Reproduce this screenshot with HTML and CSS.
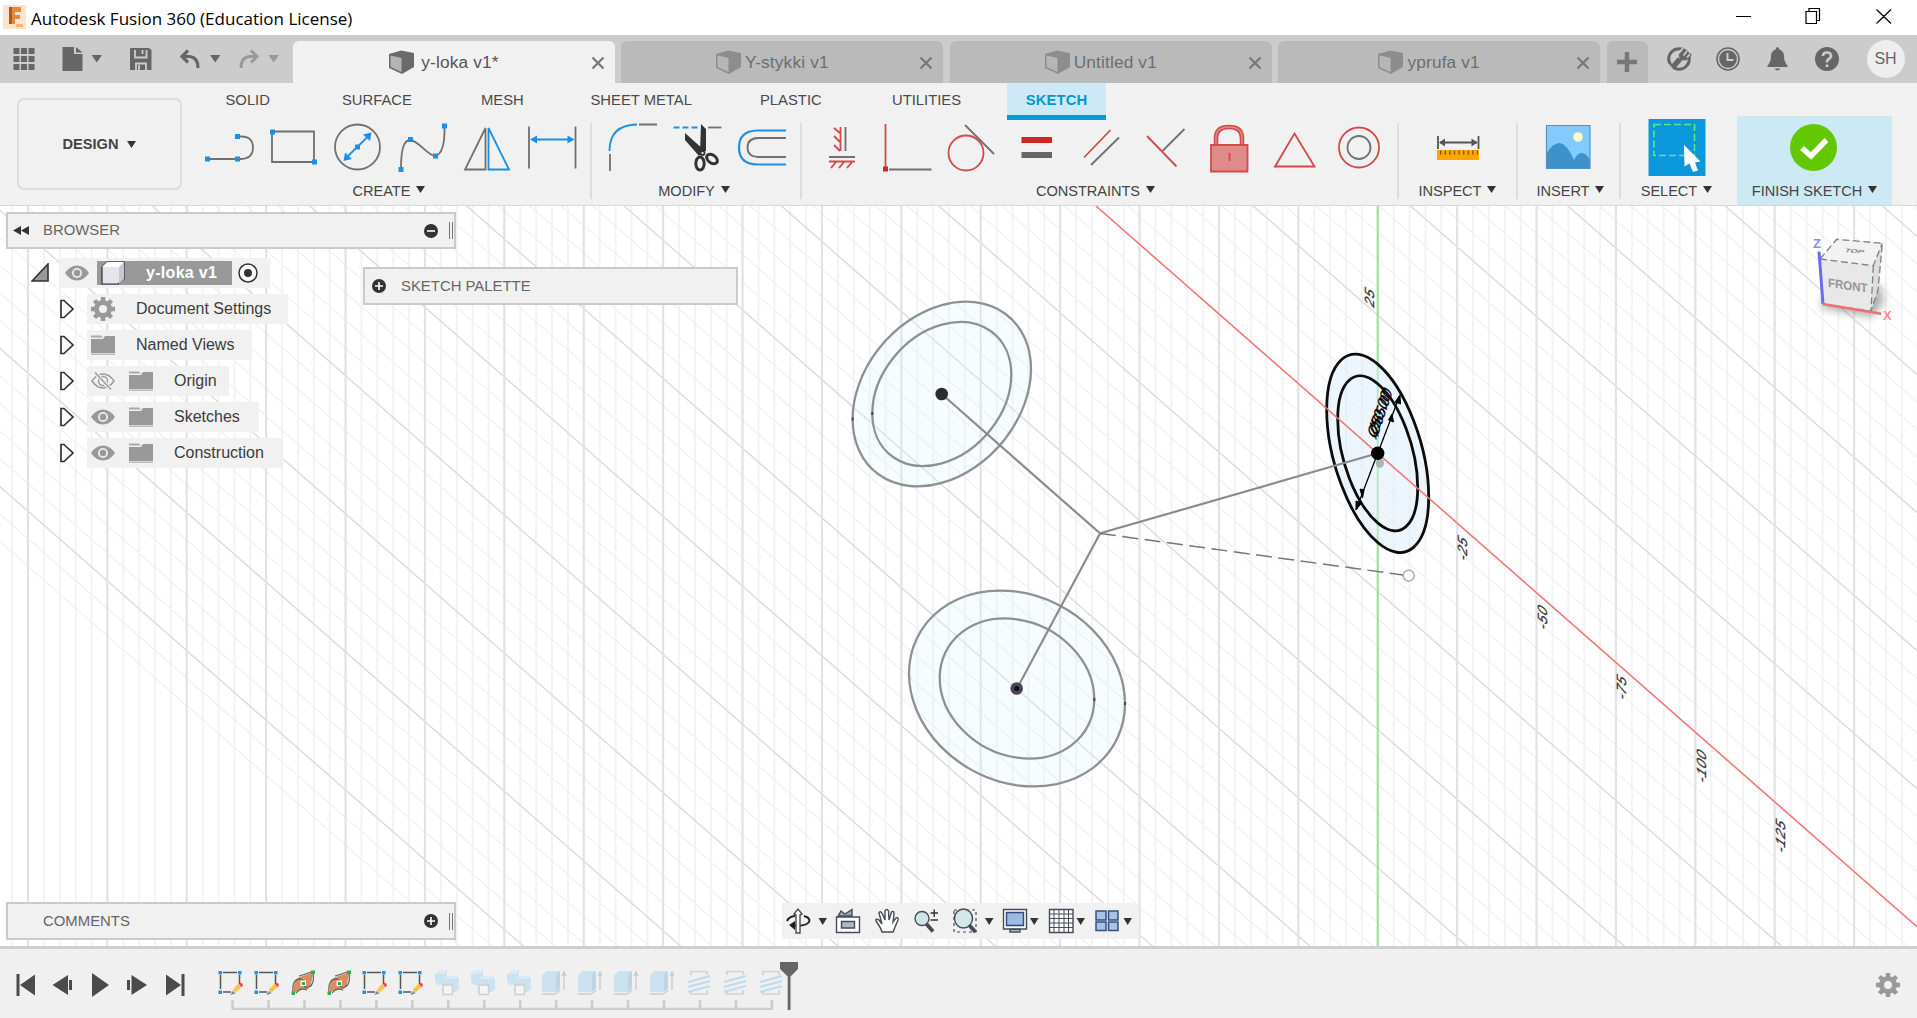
FILE: index.html
```html
<!DOCTYPE html>
<html lang="en">
<head>
<meta charset="utf-8">
<title>Autodesk Fusion 360 (Education License)</title>
<link rel="stylesheet" href="styles.css">
</head>
<body>
<svg class="defs" width="0" height="0">
  <symbol id="cube" viewBox="0 0 25 24"><path d="M0 4L12 0.500L25 3V17L13 24L0 18Z" fill="#6a6a6a"/><path d="M1.500 5.500L12.500 8V22L1.500 17Z" fill="#b4b4b4"/></symbol>
  <symbol id="close" viewBox="0 0 14 14"><path d="M1.500 1.500L12.500 12.500M12.500 1.500L1.500 12.500" stroke="#777" stroke-width="2.200" fill="none"/></symbol>
  <symbol id="caret" viewBox="0 0 9 7"><path d="M0 0H9L4.500 7Z" fill="currentColor"/></symbol>
  <symbol id="eye" viewBox="0 0 24 16"><path d="M0 8Q5 0.500 12 0.500T24 8Q19 15.500 12 15.500T0 8Z" fill="#999"/><circle cx="12" cy="8" r="5" fill="#eee"/><circle cx="12" cy="8" r="3.200" fill="#999"/></symbol>
  <symbol id="eye-off" viewBox="0 0 24 18"><path d="M1 9Q6 2 12 2T23 9Q18 16 12 16T1 9Z" fill="none" stroke="#999" stroke-width="1.500"/><circle cx="12" cy="9" r="4.500" fill="none" stroke="#999" stroke-width="1.500"/><path d="M4 0.500L20 17.500" stroke="#f1f1f1" stroke-width="4"/><path d="M4 0.500L20 17.500" stroke="#999" stroke-width="1.500"/></symbol>
  <symbol id="folder" viewBox="0 0 24 20"><path d="M0 0.500H10L12 2.500H0Z" fill="#aaa"/><path d="M0 4H12L14 1H24V18H0Z" fill="#999"/><path d="M0 18.500H24V20H0Z" fill="#bbb"/></symbol>
  <symbol id="gear" viewBox="-12 -12 24 24"><circle r="6.500" fill="none" stroke="#999" stroke-width="5"/><path d="M0-12V-7M0 12V7M-12 0H-7M12 0H7M-8.500-8.500L-5-5M8.500 8.500L5 5M-8.500 8.500L-5 5M8.500-8.500L5-5" stroke="#999" stroke-width="4.500"/></symbol>
  <symbol id="expand" viewBox="0 0 14 20"><path d="M1 1.500H4L13 10L4 18.500H1Z" fill="#fafafa" stroke="#333" stroke-width="1.700"/></symbol>
  <symbol id="plus-dot" viewBox="0 0 14 14"><circle cx="7" cy="7" r="7" fill="#333"/><path d="M3 7H11M7 3V11" stroke="#fff" stroke-width="1.600"/></symbol>
  <symbol id="minus-dot" viewBox="0 0 14 14"><circle cx="7" cy="7" r="7" fill="#333"/><path d="M3 7H11" stroke="#fff" stroke-width="1.600"/></symbol>
  <symbol id="f-sketch" viewBox="0 0 26 26"><path d="M5 2.500H19M2.500 5V19M21.500 5V14M5 22H13" stroke="#555" stroke-width="1.500" fill="none"/><path d="M0.500 1H4V4.500H0.500ZM20 1H23.500V4.500H20ZM0.500 20.500H4V24H0.500Z" fill="#1c8fe8"/><path d="M14.500 20L20.500 13.500L23.500 17L17 23Z" fill="#fdbf4d"/><path d="M20.500 13.500Q24.500 11.500 25 15.500L23.500 17Z" fill="#f4404a"/><path d="M14.500 21L17.500 23.500L12.500 25Z" fill="#888"/></symbol>
  <symbol id="f-form" viewBox="-1 0 26 26"><path d="M3 23Q2 9 9 7Q15 5 22 2Q21 15 17 19Q10 17 3 23Z" fill="#dd8d5c"/><path d="M2 22Q1 9 9 9Q13 10 13 14Q14 19 18 17Q24 14 22 3M8 6Q15 4 20 2M5 23Q10 17 16 20" fill="none" stroke="#666" stroke-width="1.300"/><path d="M20 0.500H24V4H20ZM0.500 21.500H4V25H0.500Z" fill="#27b34c"/><path d="M9.500 10.500H15V16H9.500Z" fill="#fff"/><path d="M10.800 12H14V15H10.800Z" fill="#27b34c"/></symbol>
  <symbol id="f-combine" viewBox="0 0 26 26"><path d="M1 4L5 0.500H13V6H22L25 9V19L21 22H8V15H4L1 12Z" fill="#cde2f0"/><path d="M13 6L9 9H21L25 6ZM1 4L5 0.500H13L10 4Z" fill="#dbeaf4"/><path d="M9 15H18.500V24.500H9Z" fill="#f5f5f5" stroke="#cfcfcf" stroke-width="1.500"/></symbol>
  <symbol id="f-extrude" viewBox="2 0 26 26"><path d="M2 5L7 1H20V18L15 22H2Z" fill="#cde2f0"/><path d="M16 5L20 1V18L16 22Z" fill="#bdd6e6"/><path d="M2 24H15L20 20" stroke="#d5d5d5" stroke-width="2" fill="none"/><path d="M24 20V4M22 6L24 2L26 6" stroke="#c9c9c9" stroke-width="1.300" fill="none"/></symbol>
  <symbol id="f-thread" viewBox="0 0 26 26"><path d="M5 5V1.500H21V5M5 20V24H21V20" fill="none" stroke="#d2d2d2" stroke-width="1.700"/><path d="M2 12L24 6M2 17L24 11M2 22L24 16" stroke="#bedcf0" stroke-width="2.200"/></symbol>
</svg>

<header class="title-bar">
  <svg class="app-logo" viewBox="0 0 23 24"><path d="M0 0H23V24H0Z" fill="#fbe3cc"/><path d="M6 2H18V7H12V10H17V14H12V19H6Z" fill="#e58a3a"/><path d="M6 2H9V19H6Z" fill="#a85a20"/><path d="M13 19H20V22H13Z" fill="#f0b37c"/></svg>
  <span class="app-title">Autodesk Fusion 360 (Education License)</span>
  <svg class="win-buttons" viewBox="1730 0 170 35" fill="none" stroke="#000" stroke-width="1.200"><path d="M1736 16.500H1751M1806 11.500H1816.500V23.500H1806ZM1809 11.500V8.500H1819.500V20.500H1816.500M1876.500 9.500L1891 23.500M1891 9.500L1876.500 23.500"/></svg>
</header>

<nav class="doc-bar">
  <svg class="quick-tools" viewBox="0 35 293 48">
    <g fill="#666"><path d="M13.500 48h6v6h-6zM21 48h6v6h-6zM28.500 48h6v6h-6zM13.500 56h6v6h-6zM21 56h6v6h-6zM28.500 56h6v6h-6zM13.500 64h6v6h-6zM21 64h6v6h-6zM28.500 64h6v6h-6z"/>
    <path d="M62.500 47H74V54H82.500V71H62.500ZM76 47L82.500 52.500H76Z"/><path d="M91.500 55H102L96.800 62.500ZM210 55H220.500L215.200 62.500Z"/>
    <path d="M130 48H149L151.500 50V70H130Z"/></g>
    <path d="M135 50V57.500H146.500V50M142.500 50V54M136 70V63.500H146V70M139 65V70" fill="none" stroke="#ccc" stroke-width="1.800"/>
    <path d="M188 50.500L182 56.500L188 62.500M183 56.500H190Q198 57.500 198 68" fill="none" stroke="#666" stroke-width="3.200"/>
    <path d="M251 50.500L257 56.500L251 62.500M256 56.500H249Q241 57.500 241 68" fill="none" stroke="#999" stroke-width="3"/>
    <path d="M268.500 55H279L273.700 62.500Z" fill="#999"/>
  </svg>
  <div class="doc-tab active"><svg class="doc-cube"><use href="#cube"/></svg><span>y-loka v1*</span><svg class="doc-close"><use href="#close"/></svg></div>
  <div class="doc-tab"><svg class="doc-cube"><use href="#cube"/></svg><span>Y-stykki v1</span><svg class="doc-close"><use href="#close"/></svg></div>
  <div class="doc-tab"><svg class="doc-cube"><use href="#cube"/></svg><span>Untitled v1</span><svg class="doc-close"><use href="#close"/></svg></div>
  <div class="doc-tab"><svg class="doc-cube"><use href="#cube"/></svg><span>yprufa v1</span><svg class="doc-close"><use href="#close"/></svg></div>
  <div class="add-tab"><svg viewBox="0 0 20 20"><path d="M0 10H20M10 0V20" stroke="#777" stroke-width="4.500"/></svg></div>
  <svg class="status-icons" viewBox="1648 35 200 48">
    <circle cx="1679" cy="59" r="10.300" fill="none" stroke="#666" stroke-width="3"/>
    <path d="M1684 49.500L1680 55L1681 59L1686 59L1691 54" fill="#666" stroke="#666" stroke-width="2.500"/><path d="M1680 59L1672 68" stroke="#666" stroke-width="5.500"/><path d="M1683 48L1680 52M1687 51L1683.500 55.500M1690 54L1687 57.500" stroke="#ccc" stroke-width="1.800"/><path d="M1668 64L1673 70" stroke="#ccc" stroke-width="1.500"/>
    <circle cx="1728" cy="59" r="11" fill="none" stroke="#666" stroke-width="1.600"/><circle cx="1728" cy="59" r="8.800" fill="#666"/><path d="M1727.500 53V60H1733.500" fill="none" stroke="#ccc" stroke-width="2"/>
    <path d="M1777.500 47Q1779 47 1779.500 49.500Q1784 51 1784 56Q1784 62 1787.500 65.500V67H1767.500V65.500Q1771 62 1771 56Q1771 51 1775.500 49.500Q1776 47 1777.500 47ZM1774.500 68.500H1780.500Q1777.500 72.500 1774.500 68.500Z" fill="#666"/>
    <circle cx="1827" cy="59" r="12" fill="#666"/><path d="M1823 56Q1823 52.500 1827 52.500T1831 56Q1831 58 1828 59.500Q1827 60.500 1827 62.500M1827 64.500V67" fill="none" stroke="#ccc" stroke-width="2.600"/>
  </svg>
  <div class="avatar">SH</div>
</nav>

<section class="ribbon">
  <button class="workspace">DESIGN<svg class="caret"><use href="#caret"/></svg></button>
  <div class="ribbon-main">
    <div class="ribbon-tabs"><span class="t1">SOLID</span><span class="t2">SURFACE</span><span class="t3">MESH</span><span class="t4">SHEET METAL</span><span class="t5">PLASTIC</span><span class="t6">UTILITIES</span><span class="t7">SKETCH</span></div>
    <div class="groups">
      <div class="group g-create">
        <svg viewBox="183 120 408 56" fill="none" stroke="#707070" stroke-width="1.800">
          <path d="M208 159H238M240 136.500Q253 136 253 147.500T240 159"/>
          <path d="M272 131.500H314V162H272Z"/>
          <circle cx="357.500" cy="147" r="22.500"/>
          <path d="M401 168Q401 140 410 140C418 140 428 156 435 156Q445 154 444.500 127"/>
          <path d="M485.500 128V169.500H465Z"/>
          <path d="M529 126.500V168.500M575.500 126.500V168.500"/>
          <g stroke="#1c8fe8"><path d="M488.500 128V169.500H509Z"/><path d="M532 139.500H572M347 157L368 136.500" stroke-width="1.800"/></g>
          <g fill="#1c8fe8" stroke="none"><path d="M205 156.500h5v5h-5zM235 156.500h5v5h-5zM235 134h5v5h-5zM270 129.500h5v5h-5zM312 159.500h5v5h-5zM355 144.500h5v5h-5zM398.500 167h5v5h-5zM408 137h5v5h-5zM433 153.500h5v5h-5zM442 123.500h5v5h-5zM530 139.500L537 135.500V143.500ZM574.500 139.500L567.500 135.500V143.500ZM371.500 132.500L370 141L363 134.500ZM343.500 161L345 152.500L352 159Z"/></g>
        </svg>
        <div class="label">CREATE<svg class="caret"><use href="#caret"/></svg></div>
      </div>
      <div class="group g-modify">
        <svg viewBox="591 120 210 56" fill="none" stroke="#707070" stroke-width="1.800">
          <path d="M609.500 151Q609.500 125 637 124.500" stroke="#1c8fe8"/><path d="M610 154V171M639 124.500H657"/>
          <path d="M673.500 127.500H698" stroke="#1c8fe8" stroke-dasharray="6 3"/><path d="M708 127.500H721.500"/>
          <path d="M701 124L706 129V151L700 152ZM685 133L704 150L699 156L685 140Z" fill="#333" stroke="none"/><circle cx="702.500" cy="153" r="2" fill="#fff" stroke="#333"/><ellipse cx="700" cy="163.500" rx="4.200" ry="6.500" stroke="#333" stroke-width="3"/><ellipse cx="712" cy="159" rx="6" ry="4" transform="rotate(38 712 159)" stroke="#333" stroke-width="3"/>
          <path d="M786 130.500H757Q739 131 739 147.500T757 164.500H786" stroke="#1c8fe8" stroke-width="2.200"/><path d="M786 138H758Q747.500 138.500 747.500 147.500T758 157H786"/>
        </svg>
        <div class="label">MODIFY<svg class="caret"><use href="#caret"/></svg></div>
      </div>
      <div class="group g-constraints">
        <svg viewBox="801 120 597 56" fill="none" stroke="#707070" stroke-width="1.800">
          <g stroke="#d24a4a">
            <path d="M840.500 127V151M840 133L834 128M840 142L834 136M840 151L834 145M829 161.500H855M836 162L831 168M844 162L839 168M852 162L847 168M885.500 124V168"/>
            <circle cx="966" cy="153" r="17.500"/>
            <path d="M1084 157.500L1110.500 130M1147 136L1176.500 166.500M1275 166.500L1294.500 133.500L1314.500 166.500Z"/>
            <circle cx="1359" cy="147.500" r="20"/>
            <path d="M1216 144V138Q1216 127 1229 127T1242 138V144" stroke-width="4.500"/><path d="M1216 144V138Q1216 127 1229 127T1242 138V144" stroke="#e08b8b" stroke-width="1.500"/>
            <path d="M1211 145H1247.500V171.500H1211Z" fill="#e08b8b"/><path d="M1229.500 153V161"/>
          </g>
          <path d="M845.500 127V151M829 157H855M889 169.500H931.500M965 125L994 154M1091 165L1119 137.500M1162.500 151L1184.500 129"/>
          <circle cx="1359" cy="147.500" r="11.500"/>
          <path d="M883 166.500h5v5h-5zM1021.500 137H1052V143H1021.500Z" fill="#cc2828" stroke="none"/><path d="M1021.500 152H1052V158H1021.500Z" fill="#666" stroke="none"/>
        </svg>
        <div class="label">CONSTRAINTS<svg class="caret"><use href="#caret"/></svg></div>
      </div>
      <div class="group g-inspect">
        <svg viewBox="1398 120 119 56"><path d="M1438 136V149M1478.500 136V149M1440 142.500H1477" stroke="#555" stroke-width="1.800"/><path d="M1439 142.500L1445 138.500V146.500ZM1477.500 142.500L1471.500 138.500V146.500Z" fill="#555"/><path d="M1437 150H1479V160H1437Z" fill="#ffa500"/><path d="M1440 152.500H1478" stroke="#8a5a00" stroke-width="4" stroke-dasharray="1.400 3.200"/></svg>
        <div class="label">INSPECT<svg class="caret"><use href="#caret"/></svg></div>
      </div>
      <div class="group g-insert">
        <svg viewBox="1517 120 103 56"><path d="M1546.500 125.500H1590V168.500H1546.500Z" fill="#83caff"/><path d="M1546.500 154Q1552 143 1560 143Q1567 144 1574 160Q1578 152 1582 153Q1586 153 1590 160V168.500H1546.500Z" fill="#3e92cc"/><path d="M1546.500 125.500H1590V168.500H1546.500Z" fill="none" stroke="#4f94c4" stroke-width="1.200"/><circle cx="1578" cy="137" r="4.800" fill="#fff8c8"/></svg>
        <div class="label">INSERT<svg class="caret"><use href="#caret"/></svg></div>
      </div>
      <div class="group g-select">
        <svg viewBox="1620 120 113 56"><path d="M1648.500 119H1705.500V176H1648.500Z" fill="#0a97dc"/><path d="M1654 124.500H1694.500V155.500H1654Z" fill="none" stroke="#69e08c" stroke-width="1.600" stroke-dasharray="7 3"/><path d="M1684 145L1700.500 161.500L1695 162.500L1698 170.500L1693 172L1689.500 163.500L1684.500 166.500Z" fill="#fff"/></svg>
        <div class="label">SELECT<svg class="caret"><use href="#caret"/></svg></div>
      </div>
      <div class="group g-finish">
        <svg viewBox="1737 120 155 56"><circle cx="1813.500" cy="147.500" r="23.500" fill="#63c800"/><path d="M1802 148L1811 156L1826.500 140" fill="none" stroke="#fff" stroke-width="5.500"/></svg>
        <div class="label">FINISH SKETCH<svg class="caret"><use href="#caret"/></svg></div>
      </div>
    </div>
  </div>
</section>

<main class="canvas">
  <svg class="scene" viewBox="0 206 1917 740" fill="none">
    <path d="M11.150 576H1917" stroke="#f3f3f3" stroke-width="740" stroke-dasharray="2 13.880"/>
    <g transform="matrix(1 .878 0 1 1377.7 453.300)">
      <path d="M-419.200-829.500V1300" stroke="#f0f0f0" stroke-width="1917" stroke-dasharray="1.600 26.020"/>
      <path d="M-419.200-829.300V1300" stroke="#d8d8d8" stroke-width="1917" stroke-dasharray="1.500 136.600"/>
    </g>
    <path d="M26.900 576H1917" stroke="#e2e2e2" stroke-width="740" stroke-dasharray="2 77.400"/>
    <g class="profile faint">
      <circle r="1" transform="matrix(89.200 -25 0 88.900 941.800 394)"/><circle r="1" transform="matrix(69.500 -19.500 0 69.300 941.800 394)"/>
      <circle r="1" transform="matrix(108 15 0 96.800 1017 688.500)"/><circle r="1" transform="matrix(77.300 10.800 0 69.200 1017 688.500)"/>
    </g>
    <path d="M1377.700 206V946" stroke="#8fe88f" stroke-width="1.800"/>
    <g class="profile sharp">
      <circle r="1" transform="matrix(51 43.500 0 89.200 1377.700 453.300)"/><circle r="1" transform="matrix(40 34.100 0 69.600 1377.700 453.300)"/>
    </g>
    <path d="M1096 206L1917 926.800" stroke="#f87474" stroke-width="1.500"/>
    <path d="M941.700 394L1100 533.400L1377.700 453.300M1100 533.400L1017 688.500" stroke="#8c8c8c" stroke-width="2.200"/>
    <path d="M1100 533.400L1403 575" stroke="#777" stroke-width="1.500" stroke-dasharray="16 6.500"/>
    <circle cx="1408.700" cy="575.700" r="5.500" fill="#fff" stroke="#aaa" stroke-width="1.500"/>
    <ellipse cx="1380" cy="463" rx="4" ry="5" fill="#999" opacity=".7"/>
    <circle cx="941.700" cy="394" r="6.300" fill="#2b2b33"/><circle cx="1016.700" cy="688.500" r="6.300" fill="#4a4458"/><circle cx="1016.700" cy="688.500" r="2.500" fill="#111"/>
    <path d="M1356 510L1400 395" stroke="#000" stroke-width="1.300"/>
    <path d="M1400 395L1400.500 404L1395 402ZM1392 414L1393.500 422L1388.500 420ZM1356 510L1356 501L1361.500 503ZM1364 490L1362.500 498L1360 489Z" fill="#000" stroke="#000"/>
    <circle cx="1377.700" cy="453.300" r="6.700" fill="#000"/>
    <path d="M852.700 417.500v3M872.300 412v3M1125 702v3M1094.300 698v3" stroke="#444" stroke-width="2"/>
    <g class="dimension"><text transform="matrix(.32 -.95 .8 .7 1375.500 440)">Ø50.00</text><text transform="matrix(.32 -.95 .8 .7 1377.500 437)">Ø65.00</text></g>
    <g class="axis-label">
      <text transform="matrix(0 -1 .95 .5 1373.500 308)">25</text>
      <text transform="matrix(0 -1 .95 .5 1467 562)">-25</text>
      <text transform="matrix(0 -1 .95 .5 1547 631)">-50</text>
      <text transform="matrix(0 -1 .95 .5 1626 701)">-75</text>
      <text transform="matrix(0 -1 .95 .5 1705.500 784)">-100</text>
      <text transform="matrix(0 -1 .95 .5 1785 854)">-125</text>
    </g>
  </svg>

  <svg class="view-cube" viewBox="1800 225 110 105">
    <defs><filter id="soft" x="-30%" y="-30%" width="160%" height="160%"><feGaussianBlur stdDeviation="4"/></filter></defs>
    <path d="M1822 296L1880 285L1884 302L1872 317L1822 308Z" fill="#777" opacity=".6" filter="url(#soft)"/>
    <path d="M1820 259L1836.700 239.300L1882.300 243.300L1878 290L1871 311L1822.700 304Z" fill="#e8e8e8"/>
    <path d="M1820 259L1836.700 239.300L1882.300 243.300L1873.300 265.700Z" fill="#f2f2f2"/>
    <path d="M1873.300 265.700L1882.300 243.300L1878 290L1871 311Z" fill="#dedede"/>
    <path d="M1820 259L1836.700 239.300L1882.300 243.300L1878 290L1871 311L1822.700 304M1820 259L1873.300 265.700L1882.300 243.300M1873.300 265.700L1871 311" fill="none" stroke="#808080" stroke-width="1.300" stroke-dasharray="7 3.500"/>
    <path d="M1819 251.700L1823 304" stroke="#6a6aee" stroke-width="3"/><path d="M1823 304L1881 313.700" stroke="#ee7070" stroke-width="2.500"/>
    <text class="face" transform="matrix(.92 .13 0 1 1828 287)">FRONT</text>
    <text class="top-face" transform="matrix(.85 .07 -.3 .45 1844 252)">TOP</text>
    <text class="axis-z" x="1813" y="248">Z</text><text class="axis-x" x="1883" y="320">X</text>
  </svg>

  <div class="panel browser-head"><svg class="rewind" viewBox="0 0 16 9"><path d="M8 0V9L0 4.500ZM16 0V9L8 4.500Z" fill="#333"/></svg><span>BROWSER</span><svg class="dot"><use href="#minus-dot"/></svg><i class="grip"></i></div>
  <div class="tree">
    <div class="row root"><svg class="tri" viewBox="0 0 18 19"><path d="M17 1V18H1Z" fill="#999" stroke="#333" stroke-width="1.600"/></svg>
      <div class="item"><svg class="eye"><use href="#eye"/></svg>
        <span class="name"><svg viewBox="0 0 24 24"><path d="M1 6L6 1H23V18L17 23H1Z" fill="#e4e4ea" stroke="#333" stroke-width="1.200"/><path d="M1 6L6 1H23L18 6Z" fill="#fff"/><path d="M18 6L23 1V18L18 23Z" fill="#c8c8d0"/></svg>y-loka v1</span>
        <svg class="radio" viewBox="0 0 20 20"><circle cx="10" cy="10" r="9" fill="#fff" stroke="#333" stroke-width="1.500"/><circle cx="10" cy="10" r="4" fill="#333"/></svg></div></div>
    <div class="row"><svg class="exp"><use href="#expand"/></svg><div class="item w1"><svg class="gear"><use href="#gear"/></svg><span>Document Settings</span></div></div>
    <div class="row"><svg class="exp"><use href="#expand"/></svg><div class="item w2"><svg class="folder"><use href="#folder"/></svg><span>Named Views</span></div></div>
    <div class="row"><svg class="exp"><use href="#expand"/></svg><div class="item w3"><svg class="eye"><use href="#eye-off"/></svg><svg class="folder"><use href="#folder"/></svg><span>Origin</span></div></div>
    <div class="row"><svg class="exp"><use href="#expand"/></svg><div class="item w4"><svg class="eye"><use href="#eye"/></svg><svg class="folder"><use href="#folder"/></svg><span>Sketches</span></div></div>
    <div class="row"><svg class="exp"><use href="#expand"/></svg><div class="item w5"><svg class="eye"><use href="#eye"/></svg><svg class="folder"><use href="#folder"/></svg><span>Construction</span></div></div>
  </div>
  <div class="panel palette"><svg class="dot"><use href="#plus-dot"/></svg><span>SKETCH PALETTE</span></div>
  <div class="panel comments"><span>COMMENTS</span><svg class="dot"><use href="#plus-dot"/></svg><i class="grip"></i></div>

  <svg class="nav-bar" viewBox="782 903 357 36" fill="none" stroke="#444b58" stroke-width="1.400">
    <path d="M804 916Q811 918 809 922Q805 927 791 925M787 921Q789 916.500 795 916" stroke="#222" stroke-width="2"/><path d="M796 933V915L794 914L798 909L802 914L800 915V933Z" fill="#fff"/><path d="M795 921L789 925L795 930Z" fill="#222" stroke="none"/>
    <path d="M836.500 917H859.500V932.500H836.500Z" fill="#fff"/><path d="M841.500 921.500H854.500V928H841.500Z" fill="#aeb9c9"/><path d="M838 916L841 911L845 914L852 909.500V916Z" fill="#9aa3ae"/>
    <path d="M882 932Q881 928 876 921Q875 918 879 920L882 924L879 913Q880 910 882.500 914L885 920L885 911Q887 908 888.500 911L889 920L891.500 912Q894 910 894 914L893 922L896 918Q899 917 898 920L893 932Z" fill="#fff"/>
    <circle cx="922" cy="918.500" r="7" fill="#cfe4e6"/><path d="M926.500 924L933 931.500" stroke-width="3.800"/><path d="M930.500 913H938M934.200 909.500V917M930.500 920H938" stroke="#333"/>
    <path d="M954 910H976V932H954Z" stroke-dasharray="3 3" stroke-width="1.200"/><ellipse cx="963.500" cy="918.500" rx="9" ry="9.500" fill="#d3e8e4"/><path d="M969 925L975.500 932" stroke-width="4"/>
    <path d="M1003.500 909.500H1026.500V929H1003.500Z" fill="#fff"/><path d="M1006.500 912.500H1023.500V925.500H1006.500Z" fill="#9cb9e2" stroke="#2b4a80"/><path d="M1010 929.500V932H1020V929.500Z" fill="#ddd"/>
    <path d="M1049.500 909.500H1073V932.500H1049.500Z" fill="#fff"/><path d="M1054 910V932M1059 910V932M1064 910V932M1068.500 910V932M1050 914H1073M1050 918.500H1073M1050 923H1073M1050 927.500H1073" stroke-width="1"/>
    <path d="M1096 911H1106V920H1096ZM1108.500 911H1118V920H1108.500ZM1096 922H1106V930.500H1096ZM1108.500 922H1118V930.500H1108.500Z" fill="#a9c2e8" stroke="#34527f" stroke-width="1.500"/>
    <path d="M818.500 918H827L822.700 925ZM985 918H993.500L989.200 925ZM1030 918H1038.500L1034.200 925ZM1076.500 918H1085L1080.700 925ZM1123.500 918H1132L1127.700 925Z" fill="#333" stroke="none"/>
  </svg>
</main>

<footer class="timeline">
  <svg class="playback" viewBox="0 949 201 69" fill="#4b4b4d"><path d="M16.500 974H19.500V996H16.500ZM20 985L35 974.500V995.500ZM52.500 985L68 975V995ZM69 980H72V990H69ZM92 973V997L109 985ZM127 980H130V990H127ZM131.500 975V995L147 985ZM166 974.500V995.500L181 985ZM181.500 974H184.500V996H181.500Z"/></svg>
  <div class="features">
    <div class="feature-row">
      <svg><use href="#f-sketch"/></svg><svg><use href="#f-sketch"/></svg><svg><use href="#f-form"/></svg><svg><use href="#f-form"/></svg><svg><use href="#f-sketch"/></svg><svg><use href="#f-sketch"/></svg><svg><use href="#f-combine"/></svg><svg><use href="#f-combine"/></svg><svg><use href="#f-combine"/></svg><svg><use href="#f-extrude"/></svg><svg><use href="#f-extrude"/></svg><svg><use href="#f-extrude"/></svg><svg><use href="#f-extrude"/></svg><svg><use href="#f-thread"/></svg><svg><use href="#f-thread"/></svg><svg><use href="#f-thread"/></svg>
    </div>
    <svg class="ruler" viewBox="213 1000 576 10"><path d="M231.500 1009H773" stroke="#ccc" stroke-width="2.400"/><path d="M231.300 1004H774" stroke="#ccc" stroke-width="8" stroke-dasharray="2.600 33.350"/></svg>
  </div>
  <svg class="marker" viewBox="779 962 20 48"><path d="M780 962H798V969L790.500 976.500V1010H787.700V976.500L780 969Z" fill="#666"/></svg>
  <svg class="settings"><use href="#gear"/></svg>
</footer>
</body>
</html>
```
FILE: styles.css
```css
* { box-sizing: border-box; }
body {
  margin: 0;
  width: 1917px;
  height: 1018px;
  overflow: hidden;
  display: flex;
  flex-direction: column;
  background: #fff;
  color: #444;
  font-family: "Liberation Sans", Arial, sans-serif;
  font-size: 15px;
}
svg { display: block; flex: none; }
.defs { position: absolute; }
.caret { width: 9px; height: 7px; color: #333; margin-left: 6px; margin-top: -3px; }

/* Window title */
.title-bar { height: 35px; flex: none; display: flex; align-items: center; padding: 0 17px 0 3px; background: #fff; }
.app-logo { width: 23px; height: 24px; margin-bottom: 2px; }
.app-title { margin-left: 5px; margin-top: 2px; font: 17px "Open Sans", "Noto Sans", sans-serif; letter-spacing: 0; color: #000; white-space: nowrap; }
.win-buttons { width: 170px; height: 35px; margin-left: auto; }

/* Document tabs */
.doc-bar { height: 48px; flex: none; display: flex; align-items: flex-end; background: #ccc; }
.quick-tools { width: 293px; height: 48px; }
.doc-tab { width: 322px; height: 42px; margin-right: 6.400px; display: flex; align-items: center; justify-content: center; position: relative; background: #bababa; border-radius: 6px 6px 0 0; font-size: 17.300px; color: #6e6e6e; padding-right: 20px; padding-top: 1px; letter-spacing: .15px; }
.doc-tab.active { background: #f1f1f1; color: #555; }
.doc-cube { width: 25px; height: 24px; margin: -2px 4px 0 0; opacity: .55; }
.active .doc-cube { opacity: 1; margin-right: 7px; }
.doc-close { position: absolute; right: 10px; top: 15px; width: 14px; height: 14px; }
.add-tab { width: 41px; height: 42px; display: flex; align-items: center; justify-content: center; background: #bababa; border-radius: 6px 6px 0 0; }
.add-tab svg { width: 20px; height: 20px; }
.status-icons { width: 200px; height: 48px; }
.avatar { width: 38px; height: 38px; margin: 0 0 5px 19px; border-radius: 50%; background: #eee; display: flex; align-items: center; justify-content: center; font-size: 16px; color: #666; }

/* Ribbon */
.ribbon { height: 123px; flex: none; display: flex; background: #f1f1f1; border-bottom: 1px solid #d8d8d8; }
.workspace { width: 165px; height: 92px; margin: 15px 0 0 17px; border: 2px solid #dcdcdc; border-radius: 7px; background: #f1f1f1; color: #444; font: bold 14.600px "Liberation Sans", Arial, sans-serif; display: flex; align-items: center; justify-content: center; padding: 0; }
.workspace .caret { margin-left: 9px; margin-top: 0; }
.ribbon-main { margin-left: 1px; }
.ribbon-tabs { height: 37px; display: flex; color: #4a4a4a; font-size: 14.800px; line-height: 34px; white-space: nowrap; }
.t1 { margin-left: 42.500px; width: 116.500px; }
.t2 { width: 139px; }
.t3 { width: 109.500px; }
.t4 { width: 169.500px; }
.t5 { width: 132px; }
.t6 { width: 115px; }
.t7 { width: 99px; text-align: center; font-weight: bold; letter-spacing: .1px; color: #0696d7; background: #cde9f5; border-bottom: 5px solid #0a97dc; }
.groups { display: flex; height: 85px; }
.group { position: relative; }
.group > svg { width: 100%; height: 56px; overflow: visible; }
.group:not(.g-select):not(.g-finish)::after { content: ""; position: absolute; right: -1px; top: 3px; width: 2px; height: 76px; background: #dcdcdc; }
.label { display: flex; justify-content: center; align-items: center; height: 30px; font-size: 14.600px; letter-spacing: -.05px; white-space: nowrap; }
.label .caret { width: 9px; height: 7px; }
.g-create { width: 408px; }
.g-create .label { padding-left: 4px; }
.g-modify { width: 210px; }
.g-modify .label { padding-right: 4px; }
.g-constraints { width: 597px; }
.g-constraints .label { padding-right: 8px; }
.g-inspect { width: 119px; }
.g-insert { width: 103px; }
.g-insert .label { padding-left: 4px; }
.g-select { width: 113px; }
.g-finish { width: 155px; height: 89px; margin: -4px 0 0 4px; padding-top: 4px; background: #cde9f5; }

/* Modelling canvas */
.canvas { position: relative; height: 740px; flex: none; background: #fff; overflow: hidden; }
.scene { width: 1917px; height: 740px; }
.profile circle { vector-effect: non-scaling-stroke; }
.faint circle { fill: rgba(225, 242, 255, .25); stroke: #8e9194; stroke-width: 2.300px; }
.faint circle:nth-child(even) { fill: none; }
.sharp circle { fill: rgba(220, 238, 252, .5); stroke: #0c0c0c; stroke-width: 2.800px; }
.sharp circle:nth-child(even) { fill: none; }
.axis-label text { font: italic 14px "Liberation Sans", Arial, sans-serif; letter-spacing: 1px; fill: #333; stroke: #333; stroke-width: .3px; }
.dimension text { font: 15px "Liberation Sans", Arial, sans-serif; letter-spacing: -.5px; fill: #000; stroke: #000; stroke-width: .3px; }
.view-cube { position: absolute; left: 1800px; top: 19px; width: 110px; height: 105px; }
.face { font: bold 12.500px "Liberation Sans", Arial, sans-serif; fill: #92969c; }
.top-face { font: bold 11px "Liberation Sans", Arial, sans-serif; fill: #888; }
.axis-z, .axis-x { font: bold 13px "Liberation Sans", Arial, sans-serif; fill: #8a8aff; }
.axis-x { fill: #ff8a8a; }

.panel { position: absolute; left: 6px; width: 450px; height: 37px; display: flex; align-items: center; border: 2px solid #cacaca; background: #f1f1f1; color: #666; font-size: 14.900px; }
.dot { width: 14px; height: 14px; }
.grip { width: 4px; height: 17px; border: solid #777; border-width: 0 1px 0 1.500px; }
.browser-head { top: 6px; padding: 0 1px 0 5px; }
.browser-head span { margin-left: 14px; }
.panel span { margin-top: -1px; }
.panel .dot + .grip { margin-left: 11px; }
.browser-head .dot, .comments .dot { margin-left: auto; }
.rewind { width: 16px; height: 9px; }
.comments { top: 696px; height: 38px; padding: 0 1px 0 35px; }
.palette { left: 363px; top: 61px; width: 375px; height: 38px; padding-left: 7px; }
.palette span { margin-left: 15px; }

.tree { position: absolute; left: 31px; top: 51.500px; display: flex; flex-direction: column; gap: 6px; font-size: 16px; color: #3c3c3c; white-space: nowrap; }
.row { display: flex; align-items: center; height: 30px; padding-left: 29px; }
.row.root { padding-left: 0; }
.tri { width: 18px; height: 19px; margin-right: 10px; }
.exp { width: 14px; height: 20px; margin-right: 13px; }
.item { display: flex; align-items: center; height: 30px; background: #f1f1f1; padding-left: 4px; }
.root .item { width: 211px; padding-left: 6px; }
.eye { width: 24px; height: 18px; }
.folder { width: 24px; height: 20px; }
.eye + .folder { margin-left: 14px; }
.item > span { margin-left: 21px; }
.gear { width: 24px; height: 24px; }
.item > .name { margin-left: 8px; width: 135px; height: 24px; background: #999; color: #fff; font-weight: bold; display: flex; align-items: center; padding-left: 4px; gap: 21px; letter-spacing: .3px; }
.name svg { width: 24px; height: 24px; }
.radio { width: 20px; height: 20px; margin-left: 6px; }
.w1 { width: 201px; }
.w2 { width: 165px; }
.w3 { width: 142px; }
.w4 { width: 172px; }
.w5 { width: 196px; }
.nav-bar { position: absolute; left: 782px; top: 697px; width: 357px; height: 36px; background: #f1f1f1; }

/* Timeline */
.timeline { height: 72px; flex: none; display: flex; background: #f0f0f0; border-top: 3px solid #cfcfcf; }
.playback { width: 201px; height: 69px; }
.features { margin-left: 12px; padding-top: 21px; }
.feature-row { display: flex; height: 30px; }
.feature-row svg { width: 26px; height: 26px; margin: 0 5px; }
.ruler { width: 576px; height: 10px; }
.marker { width: 20px; height: 48px; margin: 13px 0 0 -10px; }
.settings { width: 24px; height: 24px; margin: 24px 17px 0 auto; }
```
